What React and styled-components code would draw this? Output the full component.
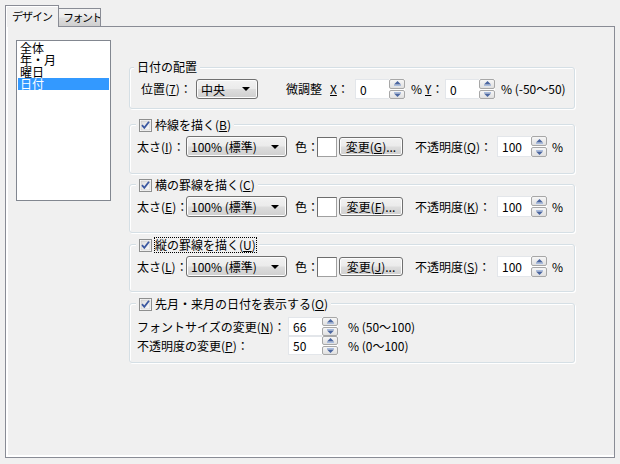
import React from 'react'
import styled, { createGlobalStyle } from 'styled-components'

const GlobalStyle = createGlobalStyle`
  html, body { margin: 0; padding: 0; background: #f0f0f0; }
  body {
    font-family: "Noto Sans CJK JP", "Noto Sans", sans-serif;
    font-size: 12px;
    color: #000;
  }
  * { box-sizing: border-box; }
`

const Window = styled.div`
  width: 620px;
  height: 464px;
  padding: 5px 0 0 5px;
  background: #f0f0f0;
`

const TabStrip = styled.div`
  display: flex;
  align-items: flex-end;
  height: 21px;
`

const Tab = styled.div`
  position: relative;
  z-index: ${p => (p.$active ? 1 : 0)};
  width: ${p => p.$w}px;
  height: ${p => (p.$active ? 22 : 18)}px;
  margin-bottom: ${p => (p.$active ? -1 : 0)}px;
  margin-left: ${p => (p.$active ? 0 : -1)}px;
  padding: ${p => (p.$active ? '3px 0 0 6px' : '1px 0 0 4px')};
  border: 1px solid #898c95;
  border-bottom: none;
  font-size: 11px;
  letter-spacing: ${p => (p.$active ? '-1px' : '-1.5px')};
  line-height: 14px;
  background: ${p =>
    p.$active
      ? '#f0f0f0'
      : 'linear-gradient(#f3f3f3 0%, #ebebeb 45%, #dddddd 55%, #cfcfcf 100%)'};
  box-shadow: ${p => (p.$active ? 'inset 1px 1px 0 #fff' : 'none')};
  white-space: nowrap;
  overflow: hidden;
`

const Panel = styled.div`
  width: 610px;
  height: 432px;
  border: 1px solid #898c95;
  box-shadow: inset 2px 0 0 #fff, inset 0 -2px 0 #fff;
  display: flex;
  align-items: flex-start;
`

const ListBox = styled.div`
  width: 95px;
  height: 161px;
  margin: 13px 0 0 10px;
  padding: 1px;
  border: 1px solid #828790;
  background: #fff;
`

const ListItem = styled.div`
  height: 12px;
  line-height: 12px;
  padding-left: 2px;
  font-size: 12px;
  white-space: nowrap;
  background: ${p => (p.$selected ? '#3399ff' : 'transparent')};
  color: ${p => (p.$selected ? '#fff' : '#000')};
`

const Column = styled.div`
  width: 446px;
  margin: 40px 0 0 18px;
  display: flex;
  flex-direction: column;
`

const Group = styled.div`
  height: ${p => p.$h}px;
  margin-top: ${p => p.$mt}px;
  border: 1px solid #d5dfe5;
  border-radius: 3px;
  box-shadow: inset 1px 1px 0 #fff, 1px 1px 0 #fff;
  display: flex;
  flex-direction: column;
`

const Legend = styled.div`
  display: flex;
  align-items: center;
  gap: 3px;
  width: fit-content;
  height: 14px;
  line-height: 14px;
  margin: ${p => p.$top}px 0 0 ${p => p.$left}px;
  padding: 0 3px;
  background: #f0f0f0;
  white-space: nowrap;
`

const FocusText = styled.span`
  outline: ${p => (p.$focus ? '1px dotted #000' : 'none')};
  outline-offset: 0;
`

const Row = styled.div`
  display: flex;
  align-items: center;
  height: ${p => p.$h}px;
  margin-top: ${p => p.$mt || 0}px;
  padding-left: ${p => p.$pl}px;
`

const Label = styled.span`
  flex: none;
  width: ${p => (p.$w ? `${p.$w}px` : 'auto')};
  margin-left: ${p => p.$ml || 0}px;
  line-height: 14px;
  white-space: nowrap;
`

const U = styled.span`
  text-decoration: underline;
  text-underline-offset: 1px;
`

const Combo = styled.div`
  flex: none;
  width: ${p => p.$w}px;
  height: ${p => p.$h}px;
  display: flex;
  align-items: center;
  justify-content: space-between;
  padding: 0 7px 0 4px;
  border: 1px solid #707070;
  border-radius: 3px;
  background: linear-gradient(#f2f2f2 0%, #ebebeb 48%, #dddddd 52%, #cfcfcf 100%);
  box-shadow: inset 0 0 0 1px #fcfcfc;
  white-space: nowrap;
`

const ComboArrow = styled.span`
  width: 0;
  height: 0;
  border-left: 4px solid transparent;
  border-right: 4px solid transparent;
  border-top: 4px solid #000;
`

const Spin = styled.div`
  flex: none;
  display: flex;
  height: ${p => p.$h}px;
`

const SpinInput = styled.div`
  width: 34px;
  height: 100%;
  padding-left: 4px;
  display: flex;
  align-items: center;
  background: #fff;
  border: 1px solid #e3e6ea;
  border-right: none;
`

const SpinButtons = styled.div`
  width: 16px;
  height: 100%;
  display: flex;
  flex-direction: column;
  gap: 1px;
  background: #fff;
`

const SpinButton = styled.div`
  flex: 1;
  display: flex;
  align-items: center;
  justify-content: center;
  border: 1px solid #a7a7a7;
  border-radius: 2px;
  background: linear-gradient(#f6f6f6, #e0e0e0);
`

const Swatch = styled.div`
  flex: none;
  width: 20px;
  height: 20px;
  background: #fff;
  border: 1px solid #a0a0a0;
  border-top-color: #6d6d6d;
  border-left-color: #6d6d6d;
`

const Button = styled.div`
  flex: none;
  width: ${p => p.$w}px;
  height: 19px;
  margin-left: ${p => p.$ml || 0}px;
  display: flex;
  align-items: center;
  justify-content: center;
  border: 1px solid #707070;
  border-radius: 3px;
  background: linear-gradient(#f2f2f2 0%, #ebebeb 48%, #dddddd 52%, #cfcfcf 100%);
  box-shadow: inset 0 0 0 1px #fcfcfc;
  white-space: nowrap;
`

function Arrow({ up }) {
  return (
    <svg width="7" height="5" viewBox="0 0 7 5">
      {up ? (
        <>
          <polygon points="3.5,0 7,3.5 0,3.5" fill="#4a66a0" />
          <rect x="0" y="4" width="7" height="1" fill="#a9bde0" />
        </>
      ) : (
        <>
          <rect x="0" y="0" width="7" height="1" fill="#a9bde0" />
          <polygon points="0,1.5 7,1.5 3.5,5" fill="#4a66a0" />
        </>
      )}
    </svg>
  )
}

function SpinBox({ value, h = 20 }) {
  return (
    <Spin $h={h}>
      <SpinInput>{value}</SpinInput>
      <SpinButtons>
        <SpinButton><Arrow up /></SpinButton>
        <SpinButton><Arrow /></SpinButton>
      </SpinButtons>
    </Spin>
  )
}

function CheckBox() {
  return (
    <svg width="13" height="13" viewBox="0 0 13 13">
      <defs>
        <linearGradient id="cbg" x1="0" y1="0" x2="1" y2="1">
          <stop offset="0" stopColor="#dcdcdc" />
          <stop offset="1" stopColor="#fbfbfb" />
        </linearGradient>
      </defs>
      <rect x="0.5" y="0.5" width="12" height="12" fill="#fff" stroke="#8e8f8f" />
      <rect x="2" y="2" width="9" height="9" fill="url(#cbg)" stroke="#c0c0c0" strokeWidth="0.6" />
      <path d="M3 6.2 L5.3 8.8 L10 2.8" fill="none" stroke="#3b58a0" strokeWidth="1.8" />
    </svg>
  )
}

function LineGroup({ title, mnemonic, focus, mt, h, sizeKey, colorKey, opacityKey }) {
  return (
    <Group $mt={mt} $h={h}>
      <Legend $top={-7} $left={6}>
        <CheckBox />
        <FocusText $focus={focus}>{title}(<U>{mnemonic}</U>)</FocusText>
      </Legend>
      <Row $h={21} $mt={4} $pl={7}>
        <Label $w={49}>太さ(<U>{sizeKey}</U>)：</Label>
        <Combo $w={101} $h={21}>100% (標準)<ComboArrow /></Combo>
        <Label $w={22} $ml={8}>色：</Label>
        <Swatch />
        <Button $w={64} $ml={2}>変更(<U>{colorKey}</U>)...</Button>
        <Label $w={82} $ml={12}>不透明度(<U>{opacityKey}</U>)：</Label>
        <SpinBox value="100" h={21} />
        <Label $ml={5}>%</Label>
      </Row>
    </Group>
  )
}

export default function App() {
  return (
    <>
      <GlobalStyle />
      <Window>
        <TabStrip>
          <Tab $active $w={54}>デザイン</Tab>
          <Tab $w={43}>フォント</Tab>
        </TabStrip>
        <Panel>
          <ListBox>
            <ListItem>全体</ListItem>
            <ListItem>年・月</ListItem>
            <ListItem>曜日</ListItem>
            <ListItem $selected>日付</ListItem>
          </ListBox>
          <Column>
            <Group $mt={0} $h={42}>
              <Legend $top={-8} $left={4}>日付の配置</Legend>
              <Row $h={20} $mt={5} $pl={11}>
                <Label $w={55}>位置(<U>7</U>)：</Label>
                <Combo $w={62} $h={20}>中央<ComboArrow /></Combo>
                <Label $w={44} $ml={28}>微調整</Label>
                <Label $w={25}><U>X</U>：</Label>
                <SpinBox value="0" />
                <Label $w={14} $ml={6}>%</Label>
                <Label $w={20}><U>Y</U>：</Label>
                <SpinBox value="0" />
                <Label $ml={6}>% (-50〜50)</Label>
              </Row>
            </Group>
            <LineGroup title="枠線を描く" mnemonic="B" mt={15} h={50} sizeKey="I" colorKey="G" opacityKey="Q" />
            <LineGroup title="横の罫線を描く" mnemonic="C" mt={10} h={49} sizeKey="E" colorKey="F" opacityKey="K" />
            <LineGroup title="縦の罫線を描く" mnemonic="U" focus mt={11} h={48} sizeKey="L" colorKey="J" opacityKey="S" />
            <Group $mt={11} $h={60}>
              <Legend $top={-7} $left={6}>
                <CheckBox />
                <span>先月・来月の日付を表示する(<U>O</U>)</span>
              </Legend>
              <Row $h={19} $mt={6} $pl={7}>
                <Label $w={151}>フォントサイズの変更(<U>N</U>)：</Label>
                <SpinBox value="66" h={19} />
                <Label $ml={10}>% (50〜100)</Label>
              </Row>
              <Row $h={19} $pl={7}>
                <Label $w={151}>不透明度の変更(<U>P</U>)：</Label>
                <SpinBox value="50" h={19} />
                <Label $ml={10}>% (0〜100)</Label>
              </Row>
            </Group>
          </Column>
        </Panel>
      </Window>
    </>
  )
}
